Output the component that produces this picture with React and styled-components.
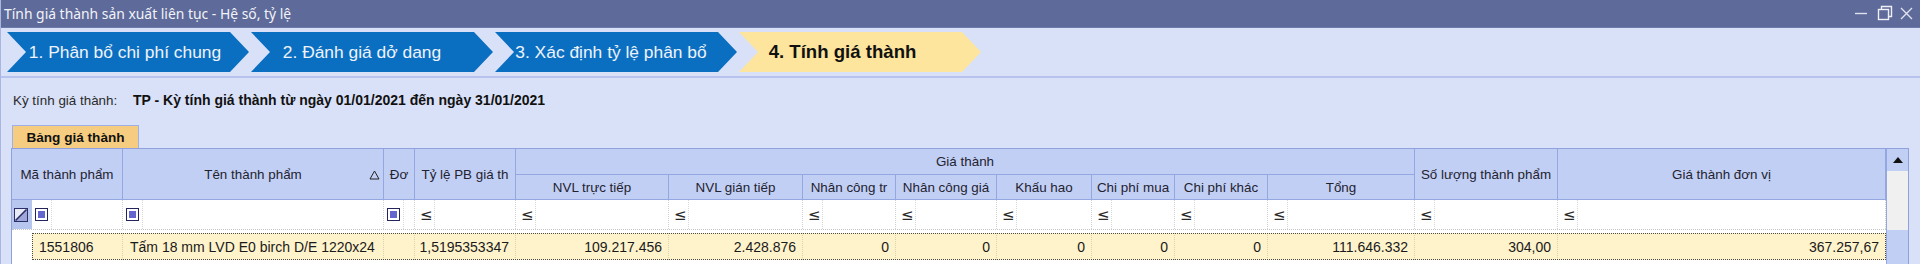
import React from "react";
import styled, { createGlobalStyle } from "styled-components";

const GlobalStyle = createGlobalStyle`
  html, body { margin: 0; padding: 0; }
  body { background: #d9e1f8; overflow: hidden; }
  * { box-sizing: border-box; }
`;

const SANS = `"Liberation Sans", Arial, sans-serif`;

const Window = styled.div`
  width: 1920px;
  height: 264px;
  background: #d9e1f8;
  border-left: 1px solid #aab6e0;
  display: flex;
  flex-direction: column;
  overflow: hidden;
`;

const TitleBar = styled.div`
  height: 28px;
  flex: none;
  background: #5e6a99;
  border-bottom: 1px solid #6f7ba8;
  display: flex;
  align-items: center;
  justify-content: space-between;
  padding: 0 3px 0 3px;
`;

const TitleText = styled.span`
  font-family: "Noto Sans", "Liberation Sans", sans-serif;
  font-size: 13.9px;
  color: #f2f3f8;
`;

const Controls = styled.div`
  display: flex;
  align-items: center;
`;

const StepBar = styled.div`
  flex: none;
  display: flex;
  gap: 2px;
  padding: 4px 0 4px 6px;
  border-bottom: 2px solid #b7c3ec;
`;

const Step = styled.div`
  width: 242px;
  height: 40px;
  flex: none;
  display: flex;
  align-items: center;
  justify-content: center;
  padding: 0 ${(p) => p.$padR}px 0 ${(p) => p.$padL}px;
  background: ${(p) => (p.$active ? "#fde59d" : "#0b6fc1")};
  color: ${(p) => (p.$active ? "#111" : "#eef3fb")};
  font-family: ${SANS};
  font-size: ${(p) => (p.$active ? "18.6px" : "17.4px")};
  font-weight: ${(p) => (p.$active ? 700 : 400)};
  white-space: nowrap;
  clip-path: polygon(0 0, calc(100% - 19px) 0, 100% 50%, calc(100% - 19px) 100%, 0 100%, 19px 50%);
`;

const InfoRow = styled.div`
  flex: none;
  height: 46px;
  display: flex;
  align-items: center;
  padding: 0 0 2px 12px;
  font-family: ${SANS};
  white-space: nowrap;
`;

const InfoLabel = styled.span`
  width: 120px;
  flex: none;
  font-size: 13.4px;
  color: #2a2a2a;
`;

const InfoValue = styled.span`
  font-size: 14px;
  font-weight: 700;
  color: #111;
`;

const TabStrip = styled.div`
  flex: none;
  display: flex;
  padding-left: 11px;
  margin-top: 1px;
`;

const Tab = styled.div`
  width: 127px;
  height: 23px;
  background: #f6cd80;
  border: 1px solid #9fb1e4;
  border-bottom: none;
  display: flex;
  align-items: center;
  justify-content: center;
  font-family: ${SANS};
  font-weight: 700;
  font-size: 13.6px;
  color: #111;
`;

const Panel = styled.div`
  flex: none;
  margin-left: 10px;
  width: 1898px;
  height: 130px;
  border: 1px solid #8fa2dd;
  border-bottom: none;
  background: #ffffff;
  display: flex;
`;

const Table = styled.div`
  width: 1874px;
  flex: none;
  display: flex;
  flex-direction: column;
`;

const COLS = "111px 261px 31px 101px 153px 134px 93px 101px 95px 83px 93px 147px 143px 328px";
const BODY_COLS = "91px 261px 31px 101px 153px 134px 93px 101px 95px 83px 93px 147px 143px 328px";

const HeaderGrid = styled.div`
  display: grid;
  grid-template-columns: ${COLS};
  grid-template-rows: 26px 25px;
  background: #c2cff5;
`;

const HeadCell = styled.div`
  grid-row: ${(p) => (p.$tall ? "1 / span 2" : p.$sub ? "2" : "1")};
  grid-column: ${(p) => p.$col || "auto"};
  border-right: 1px solid #94a7e1;
  border-bottom: 1px solid #94a7e1;
  display: flex;
  align-items: center;
  justify-content: center;
  position: relative;
  font-family: ${SANS};
  font-size: 13.4px;
  color: #23232f;
  white-space: nowrap;
  overflow: hidden;
`;

const SortMark = styled.svg`
  position: absolute;
  right: 3px;
  top: 21px;
`;

const FilterRow = styled.div`
  display: flex;
  height: 30px;
  border-bottom: 1px dotted #c4c4c4;
`;

const Indicator = styled.div`
  width: 20px;
  flex: none;
  background: ${(p) => (p.$tint ? "#b6c6ef" : "#ffffff")};
  display: flex;
  align-items: center;
  justify-content: center;
  padding-right: 2px;
`;

const RowGrid = styled.div`
  display: grid;
  grid-template-columns: ${BODY_COLS};
  flex: none;
`;

const FilterCell = styled.div`
  display: flex;
  align-items: center;
  border-right: 1px dotted #d0d0d0;
`;

const OpBox = styled.div`
  width: 20px;
  height: 100%;
  flex: none;
  display: flex;
  align-items: center;
  justify-content: ${(p) => (p.$square ? "center" : "flex-start")};
  padding-left: ${(p) => (p.$square ? "0" : "5px")};
  border-right: 1px dotted #d6d6d6;
  font-family: "DejaVu Sans", sans-serif;
  font-size: 15px;
  color: #2a2a2a;
`;

const SquareIcon = styled.span`
  display: block;
  width: 13px;
  height: 13px;
  border: 1px solid #23235e;
  background: #6565cf;
  box-shadow: inset 0 0 0 2px #ffffff;
`;

const DataWrap = styled.div`
  display: flex;
  margin-top: 3px;
  height: 27px;
`;

const DataRow = styled(RowGrid)`
  background: #fff3cc;
  outline: 1px dotted #4a4a4a;
  outline-offset: -1px;
`;

const DataCell = styled.div`
  display: flex;
  align-items: center;
  justify-content: ${(p) => (p.$right ? "flex-end" : "flex-start")};
  padding: 0 6px 0 7px;
  border-right: 1px dotted #d9d2b0;
  font-family: ${SANS};
  font-size: 14px;
  color: #1a1a1a;
  white-space: nowrap;
  overflow: hidden;
`;

const Scrollbar = styled.div`
  width: 22px;
  flex: none;
  display: flex;
  flex-direction: column;
  border-left: 1px solid #94a7e1;
`;

const ScrollBtn = styled.div`
  height: 22px;
  background: #c2cff5;
  display: flex;
  align-items: center;
  justify-content: center;
`;

const ScrollTrack = styled.div`
  height: 59px;
  background: #f0f0f0;
`;

const ScrollThumb = styled.div`
  flex: 1;
  background: #c2cff5;
`;

const steps = [
  { label: "1. Phân bổ chi phí chung", padL: 24, padR: 30 },
  { label: "2. Đánh giá dở dang", padL: 20, padR: 40 },
  { label: "3. Xác định tỷ lệ phân bổ", padL: 20, padR: 30 },
  { label: "4. Tính giá thành", padL: 20, padR: 55, active: true },
];

const headers = [
  { label: "Mã thành phẩm" },
  { label: "Tên thành phẩm", sort: true },
  { label: "Đơ" },
  { label: "Tỷ lệ PB giá th" },
];
const subHeaders = [
  "NVL trực tiếp",
  "NVL gián tiếp",
  "Nhân công tr",
  "Nhân công giá",
  "Khấu hao",
  "Chi phí mua",
  "Chi phí khác",
  "Tổng",
];
const tailHeaders = ["Số lượng thành phẩm", "Giá thành đơn vị"];

const rowValues = [
  { v: "1551806" },
  { v: "Tấm 18 mm LVD E0 birch D/E 1220x24" },
  { v: "" },
  { v: "1,5195353347", r: true },
  { v: "109.217.456", r: true },
  { v: "2.428.876", r: true },
  { v: "0", r: true },
  { v: "0", r: true },
  { v: "0", r: true },
  { v: "0", r: true },
  { v: "0", r: true },
  { v: "111.646.332", r: true },
  { v: "304,00", r: true },
  { v: "367.257,67", r: true },
];

function WinIcons() {
  return (
    <Controls>
      <svg width="70" height="28" viewBox="0 0 70 28">
        <line x1="8" y1="13.5" x2="20" y2="13.5" stroke="#dfe2ee" strokeWidth="1.4" />
        <rect x="31.5" y="9.5" width="10" height="10" fill="none" stroke="#eef0f7" strokeWidth="1.4" />
        <path d="M34.5 9.5 V6.5 H44.5 V16.5 H41.5" fill="none" stroke="#eef0f7" strokeWidth="1.4" />
        <path d="M54 8 L65 19 M65 8 L54 19" stroke="#dfe2ee" strokeWidth="1.4" />
      </svg>
    </Controls>
  );
}

function EditIcon() {
  return (
    <svg width="14" height="14" viewBox="0 0 14 14">
      <rect x="0.5" y="0.5" width="13" height="13" fill="#9fa6d8" stroke="#2a2f6a" />
      <path d="M1 1 H13 L1 13 Z" fill="#e8eaf8" />
      <path d="M1.5 12.5 L12.5 1.5" stroke="#2a2f6a" strokeWidth="1.6" />
      <rect x="0.5" y="0.5" width="13" height="13" fill="none" stroke="#2a2f6a" />
    </svg>
  );
}

export default function App() {
  return (
    <>
      <GlobalStyle />
      <Window>
        <TitleBar>
          <TitleText>Tính giá thành sản xuất liên tục - Hệ số, tỷ lệ</TitleText>
          <WinIcons />
        </TitleBar>
        <StepBar>
          {steps.map((s) => (
            <Step key={s.label} $active={s.active} $padL={s.padL} $padR={s.padR}>
              {s.label}
            </Step>
          ))}
        </StepBar>
        <InfoRow>
          <InfoLabel>Kỳ tính giá thành:</InfoLabel>
          <InfoValue>TP - Kỳ tính giá thành từ ngày 01/01/2021 đến ngày 31/01/2021</InfoValue>
        </InfoRow>
        <TabStrip>
          <Tab>Bảng giá thành</Tab>
        </TabStrip>
        <Panel>
          <Table>
            <HeaderGrid>
              {headers.map((h) => (
                <HeadCell key={h.label} $tall>
                  {h.label}
                  {h.sort && (
                    <SortMark width="11" height="10" viewBox="0 0 11 10">
                      <path d="M5.5 1 L10 9 H1 Z" fill="none" stroke="#222" strokeWidth="1" />
                    </SortMark>
                  )}
                </HeadCell>
              ))}
              <HeadCell $col="5 / span 8">Giá thành</HeadCell>
              {tailHeaders.map((t) => (
                <HeadCell key={t} $tall>
                  {t}
                </HeadCell>
              ))}
              {subHeaders.map((s) => (
                <HeadCell key={s} $sub>
                  {s}
                </HeadCell>
              ))}
            </HeaderGrid>
            <FilterRow>
              <Indicator $tint>
                <EditIcon />
              </Indicator>
              <RowGrid>
                {rowValues.map((c, i) => (
                  <FilterCell key={i}>
                    {i < 3 ? (
                      <OpBox $square>
                        <SquareIcon />
                      </OpBox>
                    ) : (
                      <OpBox>≤</OpBox>
                    )}
                  </FilterCell>
                ))}
              </RowGrid>
            </FilterRow>
            <DataWrap>
              <Indicator />
              <DataRow>
                {rowValues.map((c, i) => (
                  <DataCell key={i} $right={c.r}>
                    {c.v}
                  </DataCell>
                ))}
              </DataRow>
            </DataWrap>
          </Table>
          <Scrollbar>
            <ScrollBtn>
              <svg width="10" height="6" viewBox="0 0 10 6">
                <path d="M5 0 L10 6 H0 Z" fill="#111" />
              </svg>
            </ScrollBtn>
            <ScrollTrack />
            <ScrollThumb />
          </Scrollbar>
        </Panel>
      </Window>
    </>
  );
}
